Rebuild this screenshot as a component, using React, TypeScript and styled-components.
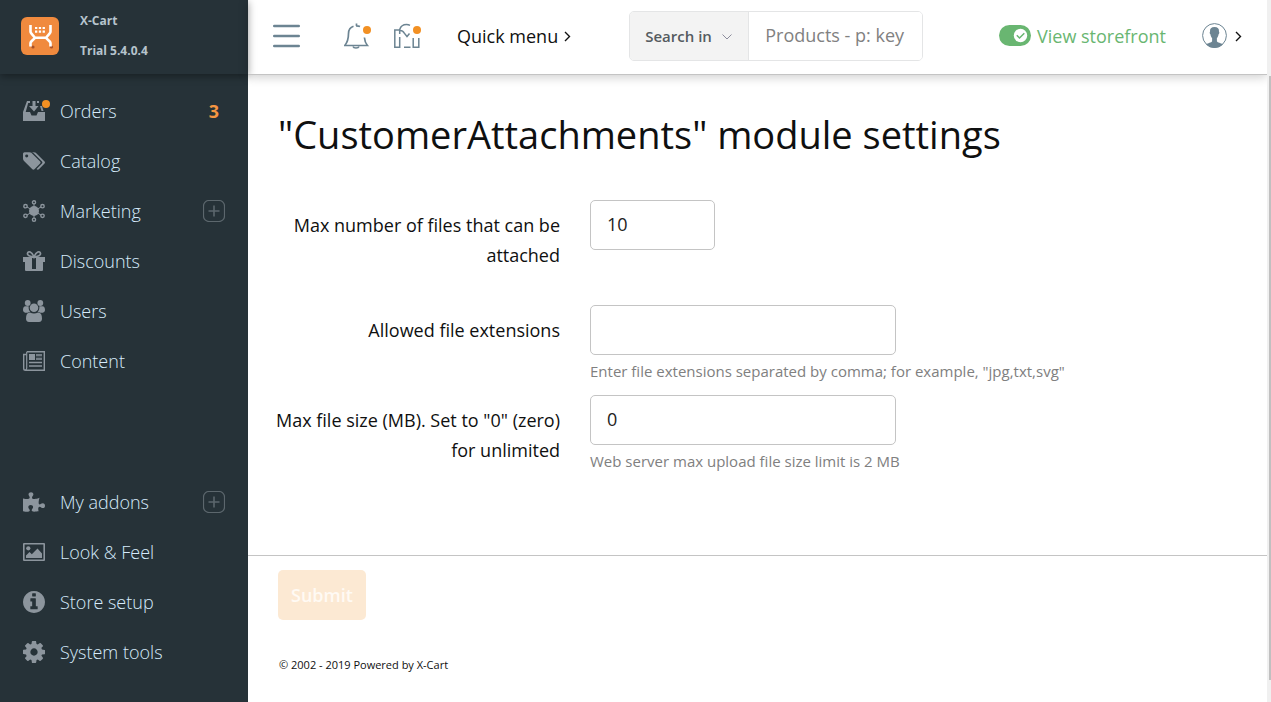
import React from "react";
import styled, { createGlobalStyle } from "styled-components";
import { FaPuzzlePiece } from "react-icons/fa";

const colors = {
  side: "#263238",
  sideIcon: "#8c959d",
  sideText: "#d6ebfb",
  slate: "#6c8492",
  orange: "#f29023",
  green: "#69b671",
  border: "#c4c4c4",
  ink: "#0f1010",
  muted: "#808080",
};

const GlobalStyle = createGlobalStyle`
  *, *::before, *::after { box-sizing: border-box; }
  body {
    margin: 0;
    background: #fff;
    color: ${colors.ink};
    font-family: "Open Sans", "Liberation Sans", sans-serif;
    font-size: 18px;
  }
  button, input { font-family: inherit; font-size: inherit; }
  svg { display: block; flex: none; }
`;

const Page = styled.div`
  display: flex;
  min-height: 100vh;
`;

const Sidebar = styled.aside`
  display: flex;
  flex-direction: column;
  flex: none;
  width: 248px;
  padding-bottom: 25px;
  background: ${colors.side};
`;

const Brand = styled.div`
  display: flex;
  align-items: center;
  gap: 21px;
  height: 74px;
  margin-bottom: 12px;
  padding: 0 21px 3px;
  box-shadow: 0 2px 8px rgba(0, 0, 0, 0.4);
`;

const BrandText = styled.div`
  color: #b6c4cd;
  font-size: 12px;
  font-weight: 700;
  line-height: 30px;
`;

const NavList = styled.ul<{ $bottom?: boolean }>`
  margin: ${(p) => (p.$bottom ? "auto 0 0" : "0")};
  padding: 0;
  list-style: none;
`;

const NavItem = styled.li`
  display: flex;
  align-items: center;
  height: 50px;
  padding: 0 23px;
`;

const NavLink = styled.a`
  display: flex;
  flex: 1;
  align-items: center;
  gap: 15px;
  color: ${colors.sideText};
  font-weight: 300;
  line-height: 50px;
  text-decoration: none;
`;

const NavIcon = styled.span`
  position: relative;
  display: flex;
  align-items: center;
  justify-content: center;
  width: 22px;
  height: 22px;
  color: ${colors.sideIcon};
`;

const Dot = styled.i`
  position: absolute;
  top: 0;
  right: -5px;
  width: 8px;
  height: 8px;
  border-radius: 50%;
  background: ${colors.orange};
`;

const Count = styled.span`
  padding-right: 6px;
  color: #f59542;
  font-weight: 700;
`;

const PlusButton = styled.button`
  display: flex;
  padding: 0;
  border: 0;
  background: none;
  color: #5c676d;
`;

const Main = styled.main`
  display: flex;
  flex: 1;
  flex-direction: column;
  min-width: 0;
`;

const TopBar = styled.header`
  display: flex;
  flex: none;
  align-items: center;
  height: 75px;
  padding: 0 25px 3px;
  border-bottom: 1px solid ${colors.border};
  box-shadow: 0 2px 10px rgba(0, 0, 0, 0.2);
`;

const IconButton = styled.button<{ $gap: number }>`
  position: relative;
  display: flex;
  margin-right: ${(p) => p.$gap}px;
  padding: 0;
  border: 0;
  background: none;
  color: ${colors.slate};
`;

const BadgeDot = styled(Dot)`
  top: 3px;
  right: 0;
`;

const MenuButton = styled.button`
  display: flex;
  align-items: center;
  gap: 6px;
  padding: 0;
  border: 0;
  background: none;
  color: ${colors.ink};
  white-space: nowrap;
`;

const Search = styled.form`
  display: flex;
  flex: 0 1 294px;
  height: 50px;
  margin: 0 24px 0 58px;
  overflow: hidden;
  border: 1px solid #e4e5e6;
  border-radius: 5px;
`;

const SearchScope = styled.button`
  display: flex;
  flex: none;
  align-items: center;
  gap: 10px;
  width: 119px;
  padding: 0 15px;
  border: 0;
  border-right: 1px solid #e4e5e6;
  background: #f3f3f3;
  color: #555b60;
  font-size: 15px;
  font-weight: 600;
`;

const SearchInput = styled.input`
  flex: 1;
  min-width: 0;
  padding: 0 16px 2px;
  border: 0;
  outline: 0;
  color: ${colors.ink};
  &::placeholder { color: #818181; opacity: 1; }
`;

const Storefront = styled.a`
  display: flex;
  align-items: center;
  gap: 6px;
  margin: 0 36px 0 auto;
  color: ${colors.green};
  white-space: nowrap;
  text-decoration: none;
`;

const Content = styled.form`
  display: flex;
  flex-direction: column;
`;

const Title = styled.h1`
  margin: 0;
  padding: 29px 30px 36px;
  font-size: 38px;
  font-weight: 400;
  line-height: 60px;
`;

const Fields = styled.div`
  padding: 0 30px 60px 20px;
`;

const Field = styled.div<{ $after: number }>`
  display: grid;
  grid-template-columns: 292px minmax(0, 1fr);
  column-gap: 30px;
  margin-bottom: ${(p) => p.$after}px;
`;

const Label = styled.label`
  padding-top: 10px;
  line-height: 30px;
  text-align: right;
`;

const TextInput = styled.input<{ $width: number }>`
  display: block;
  width: ${(p) => p.$width}px;
  max-width: 100%;
  height: 50px;
  padding: 0 16px 2px;
  border: 1px solid ${colors.border};
  border-radius: 5px;
  outline: 0;
  color: #222;
`;

const Help = styled.p`
  margin: 6px 0 0;
  color: ${colors.muted};
  font-size: 15px;
  line-height: 20px;
`;

const Actions = styled.div`
  padding: 14px 30px 0;
  border-top: 1px solid ${colors.border};
`;

const Submit = styled.button`
  height: 50px;
  padding: 0 13px;
  border: 0;
  border-radius: 5px;
  background: #fce9d3;
  color: #fffaf4;
  font-weight: 600;
`;

const Copyright = styled.footer`
  padding: 35px 31px 0;
  font-size: 11px;
  line-height: 20px;
`;

const ScrollTrack = styled.div`
  flex: none;
  width: 4px;
  padding: 76px 0 22px 2px;
  background: #f0f0f0;
`;

const ScrollThumb = styled.div`
  height: 100%;
  background: #c0c0c0;
`;

const Logo = () => (
  <svg width="38" height="38" viewBox="0 0 38 38" fill="none">
    <rect width="38" height="38" rx="6" fill="#f08a3e" />
    <g fill="#a8522a">
      <circle cx="12" cy="30" r="1.600" />
      <circle cx="30.500" cy="30" r="1.600" />
    </g>
    <path
      d="M9.500 8v6.500q0 1 .8 1.800L14 20.800h11l3.700-4.500q.8-.8.8-1.800V8M14 20.800L10.300 24.500q-.8.800-.8 1.800V29.500M25 20.800l3.700 3.700q.8.800.8 1.800V29.500"
      stroke="#fff"
      strokeWidth="2.600"
    />
    <path
      d="M14 11h10M14 14.700h10"
      stroke="#fff"
      strokeWidth="2.200"
      strokeDasharray="2.300 1.500"
    />
  </svg>
);

const OrdersIcon = () => (
  <svg width="22" height="22" viewBox="0 0 22 22" fill="currentColor">
    <path d="M4 1h3v2H5.200L2.700 12H7l1.500 3.500h5L15 12h7v9H0v-9z" />
    <path d="M9.500 1h3v5h3L11 11.500 6 6h3.500zM14 1h2v2h-2zM17 6h2l1.500 5h-2z" />
  </svg>
);

const TagsIcon = () => (
  <svg width="22" height="18" viewBox="0 128 1900 1520" fill="currentColor">
    <path d="M448 448q0-53-37.500-90.500t-90.500-37.500-90.500 37.500-37.500 90.500 37.500 90.500 90.500 37.500 90.500-37.500 37.500-90.500zm1067 576q0 53-37 90l-491 492q-39 37-91 37-53 0-90-37l-715-716q-38-37-64.500-101t-26.500-117v-416q0-52 38-90t90-38h416q53 0 117 26.500t102 64.500l715 714q37 39 37 91zm384 0q0 53-37 90l-491 492q-39 37-91 37-36 0-59-14t-53-45l470-470q37-37 37-90 0-52-37-91l-715-714q-38-38-102-64.500t-117-26.500h224q53 0 117 26.500t102 64.500l715 714q37 39 37 91z" />
  </svg>
);

const InfoIcon = () => (
  <svg width="22" height="22" viewBox="128 128 1536 1536" fill="currentColor">
    <path d="M1152 1376v-160q0-14-9-23t-23-9h-96v-512q0-14-9-23t-23-9h-320q-14 0-23 9t-9 23v160q0 14 9 23t23 9h96v320h-96q-14 0-23 9t-9 23v160q0 14 9 23t23 9h448q14 0 23-9t9-23zm-128-896v-160q0-14-9-23t-23-9h-192q-14 0-23 9t-9 23v160q0 14 9 23t23 9h192q14 0 23-9t9-23zm640 416q0 209-103 385.500t-279.500 279.500-385.500 103-385.500-103-279.500-279.500-103-385.500 103-385.500 279.500-279.500 385.500-103 385.500 103 279.500 279.500 103 385.500z" />
  </svg>
);

const CogIcon = () => (
  <svg width="22" height="22" viewBox="128 128 1536 1536" fill="currentColor">
    <path d="M1152 896q0-106-75-181t-181-75-181 75-75 181 75 181 181 75 181-75 75-181zm512-109v222q0 12-8 23t-20 13l-185 28q-19 54-39 91 35 50 107 138 10 12 10 25t-9 23q-27 37-99 108t-94 71q-12 0-26-9l-138-108q-44 23-91 38-16 136-29 186-7 28-36 28h-222q-14 0-24.500-8.500t-11.500-21.500l-28-184q-49-16-90-37l-141 107q-10 9-25 9-14 0-25-11-126-114-165-168-7-10-7-23 0-12 8-23 15-21 51-66.500t54-70.500q-27-50-41-99l-183-27q-13-2-21-12.500t-8-23.500v-222q0-12 8-23t19-13l186-28q14-46 39-92-40-57-107-138-10-12-10-24 0-10 9-23 26-36 98.500-107.500t94.500-71.500q13 0 26 10l138 107q44-23 91-38 16-136 29-186 7-28 36-28h222q14 0 24.500 8.500t11.500 21.500l28 184q49 16 90 37l142-107q9-9 24-9 13 0 25 10 129 119 165 170 7 8 7 22 0 12-8 23-15 21-51 66.500t-54 70.500q26 50 41 98l183 28q13 2 21 12.500t8 23.500z" />
  </svg>
);

const MarketingIcon = () => (
  <svg width="22" height="22" viewBox="0 0 22 22" fill="none" stroke="currentColor">
    <circle cx="11" cy="11" r="5" fill="currentColor" stroke="none" />
    <path d="M11 4v14M4 7l14 8M18 7L4 15" strokeWidth="1" />
    <g strokeWidth="1.400">
      <circle cx="11" cy="2.300" r="1.600" />
      <circle cx="11" cy="19.700" r="1.600" />
      <circle cx="2.500" cy="6.200" r="1.700" />
      <circle cx="19.500" cy="6.200" r="1.700" />
      <circle cx="2.500" cy="15.800" r="1.700" />
      <circle cx="19.500" cy="15.800" r="1.700" />
    </g>
  </svg>
);

const GiftIcon = () => (
  <svg width="22" height="22" viewBox="0 0 22 22" fill="currentColor">
    <path d="M0 7h22v5h-2v8q0 1-1 1H3q-1 0-1-1v-8H0zM9 8v11h4V8z" fillRule="evenodd" />
    <path
      d="M11 7C9 1.500 5 .500 4.500 3.500 4.200 6 7.500 6.500 11 7c3.500-.5 6.800-1 6.500-3.500C17 .500 13 1.500 11 7z"
      fill="none"
      stroke="currentColor"
      strokeWidth="1.700"
    />
  </svg>
);

const UsersIcon = () => (
  <svg width="22" height="22" viewBox="0 0 22 22" fill="currentColor">
    <circle cx="4.700" cy="3" r="2.900" />
    <circle cx="17.300" cy="3" r="2.900" />
    <circle cx="11" cy="7.700" r="4.300" />
    <path d="M2.500 6.300h3.200c-.3 2.500.3 4 1.600 5.700-1 0-2 .2-2.800.8C1.500 13 0 12 0 10c0-2 .8-3.700 2.500-3.700zM19.500 6.300h-3.200c.3 2.500-.3 4-1.600 5.700 1 0 2 .2 2.800.8 3 .2 4.500-.8 4.500-2.800 0-2-.8-3.700-2.500-3.700z" />
    <path d="M7 12.500c2.500 1.300 5.500 1.300 8 0 2.800 0 4 2 4 6 0 2.300-1 3.500-3 3.500H6c-2 0-3-1.200-3-3.500 0-4 1.200-6 4-6z" />
  </svg>
);

const NewsIcon = () => (
  <svg width="22" height="22" viewBox="0 0 22 22" fill="none" stroke="currentColor">
    <path d="M3.700 1.700h17.600v18.600H2.500Q.700 20.300.700 18.500V4.500h3" strokeWidth="1.400" />
    <path d="M3.700 2v16q0 2-1.500 2" strokeWidth="1.200" />
    <path d="M6 4h6v6H6z" fill="currentColor" stroke="none" />
    <path d="M13 5h6M13 9h6M6 12.500h13M6 16h13" strokeWidth="1.400" />
    <path d="M13 7h6" strokeWidth="1" opacity=".5" />
  </svg>
);

const PictureIcon = () => (
  <svg width="22" height="18" viewBox="0 0 22 18" fill="currentColor">
    <path
      fillRule="evenodd"
      d="M1 0h20q1 0 1 1v16q0 1-1 1H1q-1 0-1-1V1q0-1 1-1zM1.600 1.600v14.800h18.800V1.600z"
    />
    <circle cx="5.300" cy="5.300" r="2.100" />
    <path d="M3 15v-2.500L6.500 9l2.300 2.200L14.500 5.500l4.500 5V15z" />
  </svg>
);

const PlusIcon = () => (
  <svg width="22" height="22" viewBox="0 0 22 22" fill="none" stroke="currentColor">
    <rect x=".5" y=".5" width="21" height="21" rx="5.500" strokeWidth="1.200" />
    <path d="M11 5.500v11M5.500 11h11" strokeWidth="1.600" />
  </svg>
);

const HamburgerIcon = () => (
  <svg width="27" height="24" viewBox="0 0 27 24" stroke="currentColor" strokeWidth="2.400" strokeLinecap="round">
    <path d="M1.200 2h24.600M1.200 12h24.600M1.200 22h24.600" />
  </svg>
);

const BellIcon = () => (
  <svg width="27" height="26" viewBox="0 0 27 26" fill="none" stroke="currentColor" strokeWidth="1.700">
    <path d="M9.500 3.300C6.300 4.300 4.600 7 4.500 10.500c0 5.500-.8 8.500-3.700 12h22.600c-1.700-2-2.700-4.500-3-8M12.500.500v2.500M12 2.800c1.500-.1 2.700.1 4 .7" />
    <path d="M9 23.500c.7 2 5.300 2 6 0" />
  </svg>
);

const NewsBadgeIcon = () => (
  <svg width="27" height="26" viewBox="0 0 27 26" fill="none" stroke="currentColor" strokeWidth="1.500">
    <path d="M5.700 7H.8v17.300h4.900V14M5.700 11V6.500C6.800 3 9.300 1.500 12.500 1.500c1.300 0 2.500.3 3.500.9" />
    <path d="M5.700 7.500c2.200-.2 3.600.8 4.600 2.700l2.700 3.300 2.500-3M10 24.300h6.500M19.200 15v9.300h5.600V15" />
  </svg>
);

const Chevron = () => (
  <svg width="7" height="13" viewBox="0 0 7 13" fill="none" stroke="#111" strokeWidth="1.400">
    <path d="M1 3l4.500 4.500L1 12" />
  </svg>
);

const ChevronDown = () => (
  <svg width="10" height="8" viewBox="0 0 10 8" fill="none" stroke="#8c8c9c">
    <path d="M.5 2.500L5 7 9.500 2.500" />
  </svg>
);

const ToggleIcon = () => (
  <svg width="32" height="22" viewBox="0 0 32 22" fill="none">
    <rect width="32" height="21" rx="10.500" fill={colors.green} />
    <circle cx="21.500" cy="10.500" r="6.700" fill="#fff" />
    <path d="M17.800 10.300l2.700 2.700 4.800-4.800" stroke={colors.green} strokeWidth="1.500" />
  </svg>
);

const AvatarIcon = () => (
  <svg width="25" height="25" viewBox="0 0 25 25" fill="currentColor">
    <circle cx="12.500" cy="12.500" r="11.900" fill="none" stroke="currentColor" />
    <path d="M12.500 4c3.300 0 4.700 1.500 4.500 4.700.6.700.3 2-.4 2.500-.3 1.800-.9 3-1.700 3.900v3.200c.6 1.500 4.300 1.700 6 3.100-2.300 2.300-5.300 3.600-8.400 3.600s-6.100-1.300-8.400-3.600c1.700-1.400 5.400-1.600 6-3.100v-3.200c-.8-.9-1.400-2.100-1.700-3.900-.7-.5-1-1.800-.4-2.500C7.800 5.500 9.200 4 12.500 4z" />
  </svg>
);

interface NavEntry {
  name: string;
  icon: React.ReactNode;
  dot?: boolean;
  count?: number;
  plus?: boolean;
}

const topNav: NavEntry[] = [
  { name: "Orders", icon: <OrdersIcon />, dot: true, count: 3 },
  { name: "Catalog", icon: <TagsIcon /> },
  { name: "Marketing", icon: <MarketingIcon />, plus: true },
  { name: "Discounts", icon: <GiftIcon /> },
  { name: "Users", icon: <UsersIcon /> },
  { name: "Content", icon: <NewsIcon /> },
];

const bottomNav: NavEntry[] = [
  { name: "My addons", icon: <FaPuzzlePiece size={22} />, plus: true },
  { name: "Look & Feel", icon: <PictureIcon /> },
  { name: "Store setup", icon: <InfoIcon /> },
  { name: "System tools", icon: <CogIcon /> },
];

const Nav = ({ items, bottom }: { items: NavEntry[]; bottom?: boolean }) => (
  <NavList $bottom={bottom}>
    {items.map((item) => (
      <NavItem key={item.name}>
        <NavLink href="#">
          <NavIcon>
            {item.icon}
            {item.dot && <Dot />}
          </NavIcon>
          {item.name}
        </NavLink>
        {item.count && <Count>{item.count}</Count>}
        {item.plus && (
          <PlusButton type="button" aria-label={`Add to ${item.name}`}>
            <PlusIcon />
          </PlusButton>
        )}
      </NavItem>
    ))}
  </NavList>
);

export default function App() {
  return (
    <Page>
      <GlobalStyle />
      <Sidebar>
        <Brand>
          <Logo />
          <BrandText>
            <div>X-Cart</div>
            <div>Trial 5.4.0.4</div>
          </BrandText>
        </Brand>
        <Nav items={topNav} />
        <Nav items={bottomNav} bottom />
      </Sidebar>
      <Main>
        <TopBar>
          <IconButton type="button" aria-label="Toggle menu" $gap={44}>
            <HamburgerIcon />
          </IconButton>
          <IconButton type="button" aria-label="Notifications" $gap={23}>
            <BellIcon />
            <BadgeDot />
          </IconButton>
          <IconButton type="button" aria-label="News" $gap={36}>
            <NewsBadgeIcon />
            <BadgeDot />
          </IconButton>
          <MenuButton type="button">
            Quick menu
            <Chevron />
          </MenuButton>
          <Search>
            <SearchScope type="button">
              Search in
              <ChevronDown />
            </SearchScope>
            <SearchInput type="text" aria-label="Search" placeholder="Products - p: key" />
          </Search>
          <Storefront href="#">
            <ToggleIcon />
            View storefront
          </Storefront>
          <IconButton type="button" aria-label="Account" $gap={8}>
            <AvatarIcon />
          </IconButton>
          <Chevron />
        </TopBar>
        <Content>
          <Title>"CustomerAttachments" module settings</Title>
          <Fields>
            <Field $after={35}>
              <Label htmlFor="max-files">Max number of files that can be attached</Label>
              <TextInput id="max-files" type="text" defaultValue="10" $width={125} />
            </Field>
            <Field $after={14}>
              <Label htmlFor="extensions">Allowed file extensions</Label>
              <div>
                <TextInput id="extensions" type="text" $width={306} />
                <Help>Enter file extensions separated by comma; for example, "jpg,txt,svg"</Help>
              </div>
            </Field>
            <Field $after={24}>
              <Label htmlFor="max-size">Max file size (MB). Set to "0" (zero) for unlimited</Label>
              <div>
                <TextInput id="max-size" type="text" defaultValue="0" $width={306} />
                <Help>Web server max upload file size limit is 2 MB</Help>
              </div>
            </Field>
          </Fields>
          <Actions>
            <Submit type="button" disabled>Submit</Submit>
          </Actions>
        </Content>
        <Copyright>© 2002 - 2019 Powered by X-Cart</Copyright>
      </Main>
      <ScrollTrack>
        <ScrollThumb />
      </ScrollTrack>
    </Page>
  );
}
